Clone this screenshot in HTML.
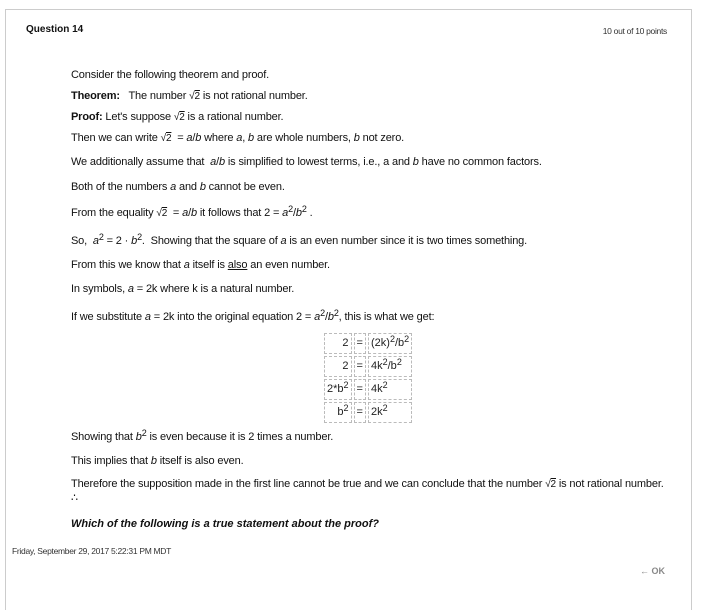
<!DOCTYPE html>
<html><head><style>
body{margin:0;width:703px;height:590px;background:#fff;position:relative;overflow:hidden;font-family:"Liberation Sans",Arial,sans-serif;color:#111;}
.card{position:absolute;left:5px;top:9px;width:685px;height:600px;border:1px solid #ccc;border-bottom:none;}
.l{position:absolute;left:71px;font-size:11px;line-height:13px;white-space:nowrap;letter-spacing:-0.15px}
i{font-style:italic}
sup{font-size:9px;line-height:0;vertical-align:4px}
.sq{font-size:10px}
.sq span{text-decoration:overline}
table{position:absolute;left:322px;top:331px;border-collapse:separate;border-spacing:2px;font-size:11px;color:#222;}
td{border:1px dashed #bbb;padding:1px 2px;height:17px;line-height:17px}
td.r{text-align:right;width:20px}
</style></head><body>
<div class="card"></div>
<div style="position:absolute;left:26px;top:24px;font-size:10px;font-weight:bold;">Question 14</div>
<div style="position:absolute;right:36px;top:26px;font-size:8.5px;color:#333;letter-spacing:-0.3px">10 out of 10 points</div>
<div class="l" style="top:69px">Consider the following theorem and proof.</div>
<div class="l" style="top:90px"><b>Theorem:</b>&nbsp;&nbsp; The number <span class="sq">√<span>2</span></span> is not rational number.</div>
<div class="l" style="top:111px"><b>Proof:</b> Let's suppose <span class="sq">√<span>2</span></span> is a rational number.</div>
<div class="l" style="top:132px">Then we can write <span class="sq">√<span>2</span></span>&nbsp; = <i>a</i>/<i>b</i> where <i>a</i>, <i>b</i> are whole numbers, <i>b</i> not zero.</div>
<div class="l" style="top:156px">We additionally assume that&nbsp; <i>a</i>/<i>b</i> is simplified to lowest terms, i.e., a and <i>b</i> have no common factors.</div>
<div class="l" style="top:181px">Both of the numbers <i>a</i> and <i>b</i> cannot be even.</div>
<div class="l" style="top:207px">From the equality <span class="sq">√<span>2</span></span>&nbsp; = <i>a</i>/<i>b</i> it follows that 2 = <i>a</i><sup>2</sup>/<i>b</i><sup>2</sup> .</div>
<div class="l" style="top:235px">So,&nbsp; <i>a</i><sup>2</sup> = 2 · <i>b</i><sup>2</sup>.&nbsp; Showing that the square of <i>a</i> is an even number since it is two times something.</div>
<div class="l" style="top:259px">From this we know that <i>a</i> itself is <u>also</u> an even number.</div>
<div class="l" style="top:283px">In symbols, <i>a</i> = 2k where k is a natural number.</div>
<div class="l" style="top:311px">If we substitute <i>a</i> = 2k into the original equation 2 = <i>a</i><sup>2</sup>/<i>b</i><sup>2</sup>, this is what we get:</div>
<table>
<tr><td class="r">2</td><td>=</td><td>(2k)<sup>2</sup>/b<sup>2</sup></td></tr>
<tr><td class="r">2</td><td>=</td><td>4k<sup>2</sup>/b<sup>2</sup></td></tr>
<tr><td class="r">2*b<sup>2</sup></td><td>=</td><td>4k<sup>2</sup></td></tr>
<tr><td class="r">b<sup>2</sup></td><td>=</td><td>2k<sup>2</sup></td></tr>
</table>
<div class="l" style="top:431px">Showing that <i>b</i><sup>2</sup> is even because it is 2 times a number.</div>
<div class="l" style="top:455px">This implies that <i>b</i> itself is also even.</div>
<div class="l" style="top:478px">Therefore the supposition made in the first line cannot be true and we can conclude that the number <span class="sq">√<span>2</span></span> is not rational number.</div>
<div class="l" style="top:492px">∴</div>
<div class="l" style="top:518px;font-weight:bold;font-style:italic;font-size:11px;letter-spacing:0">Which of the following is a true statement about the proof?</div>
<div style="position:absolute;left:12px;top:546px;font-size:8.5px;color:#333;letter-spacing:-0.3px">Friday, September 29, 2017 5:22:31 PM MDT</div>
<div style="position:absolute;left:640px;top:566px;font-size:9px;color:#888;font-weight:bold">← OK</div>
</body></html>
